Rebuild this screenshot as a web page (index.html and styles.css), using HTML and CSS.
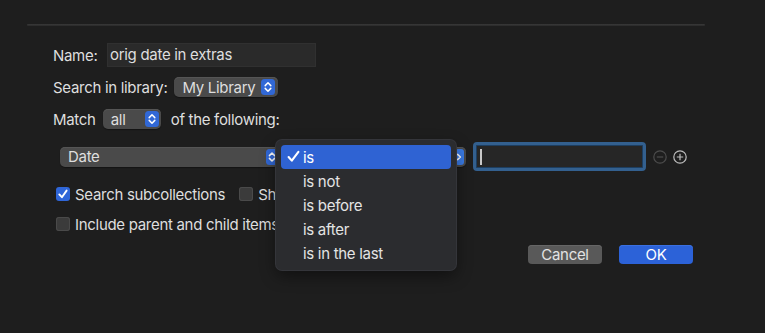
FILE: index.html
```html
<!DOCTYPE html>
<html lang="en">

<head>
    <meta http-equiv="Content-Type" content="text/html; charset=UTF-8" />
    <title>Saved Search</title>
    <link rel="stylesheet" href="styles.css">
</head>

<body>
    <div class="sheet">
        <div class="rule"></div>

        <div class="form">
            <div class="row rowName">
                <span class="nameLabel">Name:</span>
                <div class="textField nameField">orig date in extras</div>
            </div>

            <div class="row rowLibrary">
                <span>Search in library:</span>
                <div class="popup libraryPopup">
                    <span class="popupText">My Library</span>
                    <svg class="stepper" width="14" height="16" viewBox="0 0 14 16">
                        <rect x="0" y="0" width="14" height="16" rx="3.5" fill="#3168d6" />
                        <path d="M4.2 6.6 L7 3.8 L9.8 6.6 M4.2 9.4 L7 12.2 L9.8 9.4" stroke="#fff" stroke-width="1.5" fill="none" stroke-linecap="round" stroke-linejoin="round" />
                    </svg>
                </div>
            </div>

            <div class="row rowMatch">
                <span>Match</span>
                <div class="popup matchPopup">
                    <span class="popupText">all</span>
                    <svg class="stepper" width="14" height="16" viewBox="0 0 14 16">
                        <rect x="0" y="0" width="14" height="16" rx="3.5" fill="#3168d6" />
                        <path d="M4.2 6.6 L7 3.8 L9.8 6.6 M4.2 9.4 L7 12.2 L9.8 9.4" stroke="#fff" stroke-width="1.5" fill="none" stroke-linecap="round" stroke-linejoin="round" />
                    </svg>
                </div>
                <span class="followingText">of the following:</span>
            </div>

            <div class="row rowCondition">
                <div class="popup fieldPopup">
                    <span class="popupText">Date</span>
                    <svg class="stepper" width="12" height="16" viewBox="0 0 12 16">
                        <rect x="0" y="0" width="12" height="16" rx="3.5" fill="#3168d6" />
                        <path d="M3.4 6.6 L6 4 L8.6 6.6 M3.4 9.4 L6 12 L8.6 9.4" stroke="#fff" stroke-width="1.5" fill="none" stroke-linecap="round" stroke-linejoin="round" />
                    </svg>
                </div>
                <div class="popup operatorPopup">
                    <span class="popupText">is</span>
                    <svg class="stepper" width="9" height="16" viewBox="0 0 9 16">
                        <rect x="0" y="0" width="9" height="16" rx="3" fill="#3a7be6" />
                        <path d="M2.6 5.4 L5.4 8 L2.6 10.6" stroke="#fff" stroke-width="1.5" fill="none" stroke-linecap="round" stroke-linejoin="round" />
                    </svg>
                </div>
                <div class="valueField"><span class="caret"></span></div>
                <svg class="roundButton" width="14" height="14" viewBox="0 0 14 14">
                    <circle cx="7" cy="7" r="6.2" stroke="#4c4c4c" stroke-width="1.2" fill="none" />
                    <path d="M3.8 7 H10.2" stroke="#4c4c4c" stroke-width="1.2" />
                </svg>
                <svg class="roundButton" width="14" height="14" viewBox="0 0 14 14">
                    <circle cx="7" cy="7" r="6.2" stroke="#bdbdbd" stroke-width="1.2" fill="none" />
                    <path d="M3.8 7 H10.2 M7 3.8 V10.2" stroke="#bdbdbd" stroke-width="1.2" />
                </svg>
            </div>

            <div class="row rowCheck">
                <label class="check">
                    <span class="box boxOn">
                        <svg width="14" height="14" viewBox="0 0 14 14">
                            <path d="M3.3 7.4 L5.9 10.2 L10.6 3.6" stroke="#fff" stroke-width="1.9" fill="none" stroke-linecap="round" stroke-linejoin="round" />
                        </svg>
                    </span>
                    Search subcollections
                </label>
                <label class="check showCheck">
                    <span class="box"></span>
                    Show only top-level items
                </label>
            </div>

            <div class="row rowCheck rowInclude">
                <label class="check">
                    <span class="box"></span>
                    Include parent and child items
                </label>
            </div>

            <div class="actions">
                <button class="button cancelButton">Cancel</button>
                <button class="button okButton">OK</button>
            </div>
        </div>

        <!-- operator menu, open over the condition row -->
        <div class="menu">
            <div class="menuItem selected">
                <svg class="tick" width="13" height="13" viewBox="0 0 13 13">
                    <path d="M1.6 7 L4.8 10.6 L11.4 1.8" stroke="#fff" stroke-width="2.1" fill="none" stroke-linecap="round" stroke-linejoin="round" />
                </svg>
                is
            </div>
            <div class="menuItem">is not</div>
            <div class="menuItem">is before</div>
            <div class="menuItem">is after</div>
            <div class="menuItem">is in the last</div>
        </div>
    </div>
</body>

</html>
```

FILE: styles.css
```css
html, body {
    margin: 0;
    padding: 0;
    background: #1e1e1e;
}

body {
    font-family: Inter, "Noto Sans", sans-serif;
    font-size: 15px;
    letter-spacing: -0.3px;
    color: #dedede;
    -webkit-font-smoothing: antialiased;
}

.sheet {
    position: relative;
    width: 765px;
    height: 333px;
    overflow: hidden;
}

.rule {
    margin: 24px 60px 0 27px;
    height: 2px;
    background: linear-gradient(#393939, #2a2a2a);
    border-radius: 1px;
}

.form {
    display: flex;
    flex-direction: column;
    padding-left: 53px;
}

.row {
    display: flex;
    align-items: center;
    white-space: nowrap;
}

.rowName {
    margin-top: 17px;
    height: 24px;
}
.nameLabel {
    width: 54px;
}
.textField {
    box-sizing: border-box;
    height: 24px;
    background: #2a2a2a;
    border: 1px solid #303030;
    padding: 0 2px;
    line-height: 22px;
}
.nameField {
    width: 209px;
}

.rowLibrary {
    margin-top: 10px;
    height: 20px;
    gap: 7px;
}
.rowMatch {
    margin-top: 12px;
    height: 20px;
    gap: 7px;
}
.followingText {
    margin-left: 3px;
}

.popup {
    box-sizing: border-box;
    display: flex;
    align-items: center;
    height: 20px;
    padding: 0 3px 0 8px;
    background: #4a4a4a;
    border-radius: 5px;
    box-shadow: inset 0 1px 0 #555, 0 1px 1px rgba(0, 0, 0, 0.35);
}
.popupText {
    flex: 1;
}
.stepper {
    flex: none;
}
.libraryPopup {
    width: 104px;
}
.matchPopup {
    width: 58px;
    padding-right: 2px;
}

.rowCondition {
    margin-top: 13px;
    height: 29px;
    margin-left: 7px;
}
.fieldPopup {
    width: 219px;
    padding-right: 1px;
}
.operatorPopup {
    width: 182px;
    margin-left: 5px;
    padding-right: 2px;
}
.valueField {
    box-sizing: border-box;
    width: 173px;
    height: 29px;
    margin-left: 7px;
    background: #262626;
    border: 3px solid #33608f;
    border-radius: 4px;
    box-shadow: inset 0 0 0 1px #1d3e60;
    display: flex;
    align-items: center;
    padding-left: 4px;
}
.caret {
    width: 2px;
    height: 16px;
    background: #c8c8c8;
}
.roundButton {
    margin-left: 7px;
}
.roundButton + .roundButton {
    margin-left: 6px;
}

.rowCheck {
    margin-top: 16px;
    height: 14px;
    margin-left: 3px;
}
.rowInclude {
    margin-top: 16px;
}
.check {
    display: flex;
    align-items: center;
    gap: 5px;
}
.box {
    flex: none;
    box-sizing: border-box;
    width: 14px;
    height: 14px;
    border-radius: 3px;
    background: #3b3b3b;
    box-shadow: inset 0 0 0 1px #4a4a4a;
    display: flex;
}
.boxOn {
    background: #2f66d8;
    box-shadow: none;
}
.showCheck {
    margin-left: 14px;
}

.actions {
    display: flex;
    justify-content: flex-end;
    gap: 17px;
    margin-top: 14px;
    margin-right: 72px;
}
.button {
    width: 74px;
    height: 19px;
    border: none;
    border-radius: 4px;
    font-family: inherit;
    font-size: 15px;
    letter-spacing: -0.3px;
    color: #e2e2e2;
    padding: 0;
    line-height: 19px;
}
.cancelButton {
    background: #595959;
    box-shadow: inset 0 1px 0 #666;
}
.okButton {
    background: #2c62d8;
    color: #fff;
    box-shadow: inset 0 1px 0 #3a70e2;
}

.menu {
    position: absolute;
    left: 276px;
    top: 140px;
    width: 180px;
    height: 130px;
    box-sizing: border-box;
    padding: 5px;
    background: #2b2c2f;
    border-radius: 6px;
    box-shadow: 0 0 0 1px #34353a, 0 6px 16px rgba(0, 0, 0, 0.45);
}
.menuItem {
    position: relative;
    height: 24px;
    line-height: 25px;
    padding-left: 22px;
    border-radius: 4px;
    color: #e4e4e4;
}
.selected {
    background: #2f63d3;
    color: #fff;
}
.tick {
    position: absolute;
    left: 6px;
    top: 5px;
}
```
